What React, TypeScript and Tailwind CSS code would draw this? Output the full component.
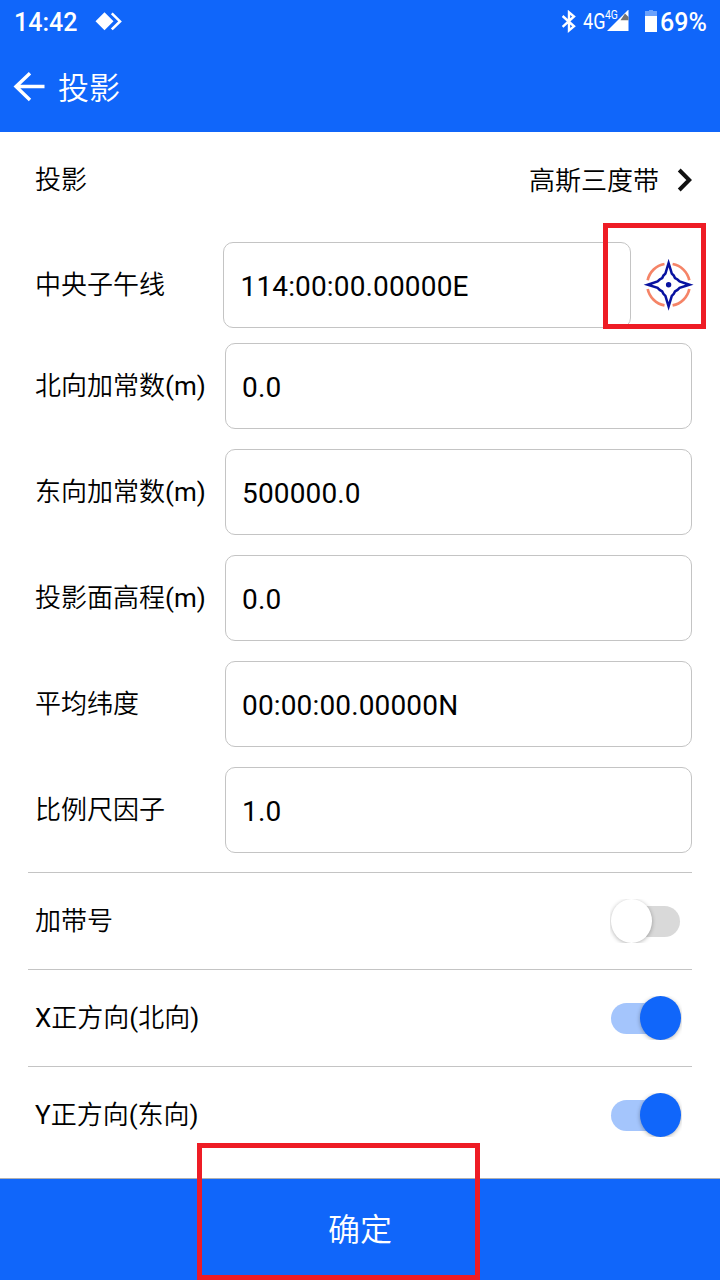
import { useState } from 'react';
import clsx from 'clsx';

const fields = [
  { label: '北向加常数', unit: '(m)', value: '0.0' },
  { label: '东向加常数', unit: '(m)', value: '500000.0' },
  { label: '投影面高程', unit: '(m)', value: '0.0' },
  { label: '平均纬度', value: '00:00:00.00000N' },
  { label: '比例尺因子', value: '1.0' },
];

const switches = [
  { label: '加带号', on: false },
  { label: 'X正方向(北向)', on: true },
  { label: 'Y正方向(东向)', on: true },
];

function StatusBar() {
  return (
    <div className="flex h-[44px] items-center text-white">
      <span className="ml-[14px] w-[81px] pt-[2px] text-[25px] leading-[46px] font-medium">14:42</span>
      <svg className="size-[28px]" viewBox="0 0 28 28" fill="none">
        <path d="M0.5 13.3 9.5 4.3 18.5 13.3 9.5 22.3Z" fill="#fff" />
        <path d="M16.8 5.4 25 13.4 16.8 21.4" stroke="#fff" strokeWidth="2.6" />
      </svg>
      <svg className="ml-auto h-[24px] w-[16px]" viewBox="0 0 16 24" fill="none" stroke="#fff" strokeWidth="2.4">
        <path d="M1.6 6 13 16.3 8 20.5V2.3L13 6.5 1.6 16.8" />
      </svg>
      <span className="relative ml-[6px] -mt-[3px] h-[30px] w-[24px]">
        <span className="absolute top-0 left-0 origin-left scale-x-[0.84] text-[21.5px] leading-[31px]">4G</span>
        <span className="absolute top-[-5px] left-[22px] origin-left scale-x-[0.8] text-[13px] leading-[28px]">4G</span>
      </span>
      <svg className="h-[24px] w-[22px]" viewBox="0 0 22 24">
        <path d="M0 21 21.5 -0.5V21Z" fill="#fff" />
        <path d="M13.5 10.2 18 3.5 21.5 7V10.2Z" fill="#737373" />
      </svg>
      <svg className="ml-[16px] h-[24px] w-[12px]" viewBox="0 0 12 24">
        <path d="M4 -1h4v2h4v5H0V1h4Z" fill="#6ba2fc" />
        <path d="M0 6h12v16H0Z" fill="#fff" />
      </svg>
      <span className="ml-[3px] w-[60px] pt-[2px] text-[25px] leading-[46px] font-medium">69%</span>
    </div>
  );
}

function Compass() {
  return (
    <svg className="h-[56px] w-[52px]" viewBox="0 0 52 56" fill="none">
      <path
        d="M30.6 7A21 21 0 0 1 47.3 23.3M47.3 32A21 21 0 0 1 30.6 48.4M22.5 48.4A21 21 0 0 1 5.7 32M5.7 23.3A21 21 0 0 1 22.5 7"
        stroke="#f58467"
        strokeWidth="2.7"
      />
      <path
        d="M26.6 6 29.8 16.6 31.8 18.6 33 21 35.5 22.5 37.6 24.5 47.5 27.7 37.6 30.9 35.5 32.9 33 34.4 31.8 36.8 29.8 38.8 26.6 49.4 23.4 38.8 21.4 36.8 20.2 34.4 17.7 32.9 15.6 30.9 5.7 27.7 15.6 24.5 17.7 22.5 20.2 21 21.4 18.6 23.4 16.6Z"
        stroke="#0812a0"
        strokeWidth="2.5"
        strokeMiterlimit="12"
      />
      <circle cx="26.6" cy="27.7" r="2.7" fill="#0812a0" />
    </svg>
  );
}

// CJK glyphs are set lighter than the latin characters around them
function Label({ text }: { text: string }) {
  return (
    <span className="font-[350]">
      {text.split(/([\x20-\x7e]+)/).map((part, index) =>
        index % 2 ? (
          <span key={index} className="font-normal">
            {part}
          </span>
        ) : (
          part
        ),
      )}
    </span>
  );
}

function Switch({ on, onClick }: { on: boolean; onClick: () => void }) {
  return (
    <button type="button" role="switch" aria-checked={on} onClick={onClick} className="relative h-[44px] w-[72px] overflow-hidden">
      <span className={clsx('absolute top-[7px] h-[31px] rounded-full', on ? 'left-[0.5px] w-[58px] bg-[#a4c5fc]' : 'left-[14px] w-[56px] bg-[#d9d9d9]')} />
      <span
        className={clsx(
          'absolute top-0 h-[43.5px] w-[41px] rounded-[50%] shadow-[0_1px_4px_rgba(0,0,0,0.3)]',
          on ? 'left-[29.5px] bg-[#1066fa]' : 'left-[1px] bg-white',
        )}
      />
    </button>
  );
}

export default function App() {
  const [values, setValues] = useState(switches.map((item) => item.on));

  const toggle = (index: number) => {
    setValues(values.map((on, i) => (i === index ? !on : on)));
  };

  return (
    <main className="relative flex h-[1280px] w-[720px] flex-col overflow-hidden bg-white font-[Roboto,'Noto_Sans_CJK_SC',sans-serif] text-[26px] text-black">
      <header className="h-[132px] shrink-0 bg-[#1066fa] text-white">
        <StatusBar />
        <div className="flex h-[88px] items-center">
          <svg className="ml-[13px] h-[32px] w-[34px]" viewBox="0 0 34 32" fill="none" stroke="#fff" strokeWidth="3.4">
            <path d="M17 1.2 3 14.5 17 28M3 14.5H31.5" />
          </svg>
          <h1 className="ml-[11px] pt-[2px] text-[31px] leading-[90px] font-[350]">投影</h1>
        </div>
      </header>

      <section className="pr-[28px] pl-[35px]">
        <div className="flex h-[96px] items-center">
          <span className="pt-[1px]">
            <Label text="投影" />
          </span>
          <span className="ml-auto pt-[3px]">
            <Label text="高斯三度带" />
          </span>
          <svg className="ml-[18px] h-[24px] w-[15px]" viewBox="0 0 15 24" fill="none" stroke="#111" strokeWidth="4">
            <path d="M2.2 2 12.2 12 2.2 22" />
          </svg>
        </div>
        <div className="mt-[14px] flex h-[86px] items-center">
          <span className="w-[188px] pt-[1px]">
            <Label text="中央子午线" />
          </span>
          <div className="h-[86px] w-[408px] rounded-[10px] border border-[#c4c4c4] pl-[16.5px] text-[28px] leading-[88px] tracking-[0.15px]">
            114:00:00.00000E
          </div>
          <div className="-mr-[4px] ml-[11px]">
            <Compass />
          </div>
        </div>
        <div className="mt-[15px] flex flex-col gap-[20px]">
          {fields.map((field) => (
            <div key={field.label} className="flex h-[86px] items-center">
              <span className="w-[190px] pt-[1px] whitespace-nowrap">
                <Label text={field.label + (field.unit ?? '')} />
              </span>
              <div className="h-[86px] w-[467px] rounded-[10px] border border-[#c4c4c4] pl-[16px] text-[28px] leading-[88px] tracking-[0.15px]">
                {field.value}
              </div>
            </div>
          ))}
        </div>
      </section>

      <section className="mt-[19px] px-[28px]">
        {switches.map((item, index) => (
          <div key={item.label} className="flex h-[97px] items-center border-t border-[#c4c4c4] pr-[10px] pl-[7px]">
            <span className="mr-auto">
              <Label text={item.label} />
            </span>
            <Switch on={values[index]} onClick={() => toggle(index)} />
          </div>
        ))}
      </section>

      <footer className="mt-auto h-[102px] shrink-0 border-t border-[#b0b0b0] bg-[#1066fa]">
        <button type="button" className="block h-full w-full pt-[1px] text-[32px] font-[350] text-white">
          确定
        </button>
      </footer>

      {/* highlight frames */}
      <div className="absolute top-[223px] left-[603px] h-[106px] w-[103px] border-[5px] border-[#ee1c25]" />
      <div className="absolute top-[1143px] left-[197px] h-[137px] w-[283px] border-[5px] border-[#ee1c25]" />
    </main>
  );
}
